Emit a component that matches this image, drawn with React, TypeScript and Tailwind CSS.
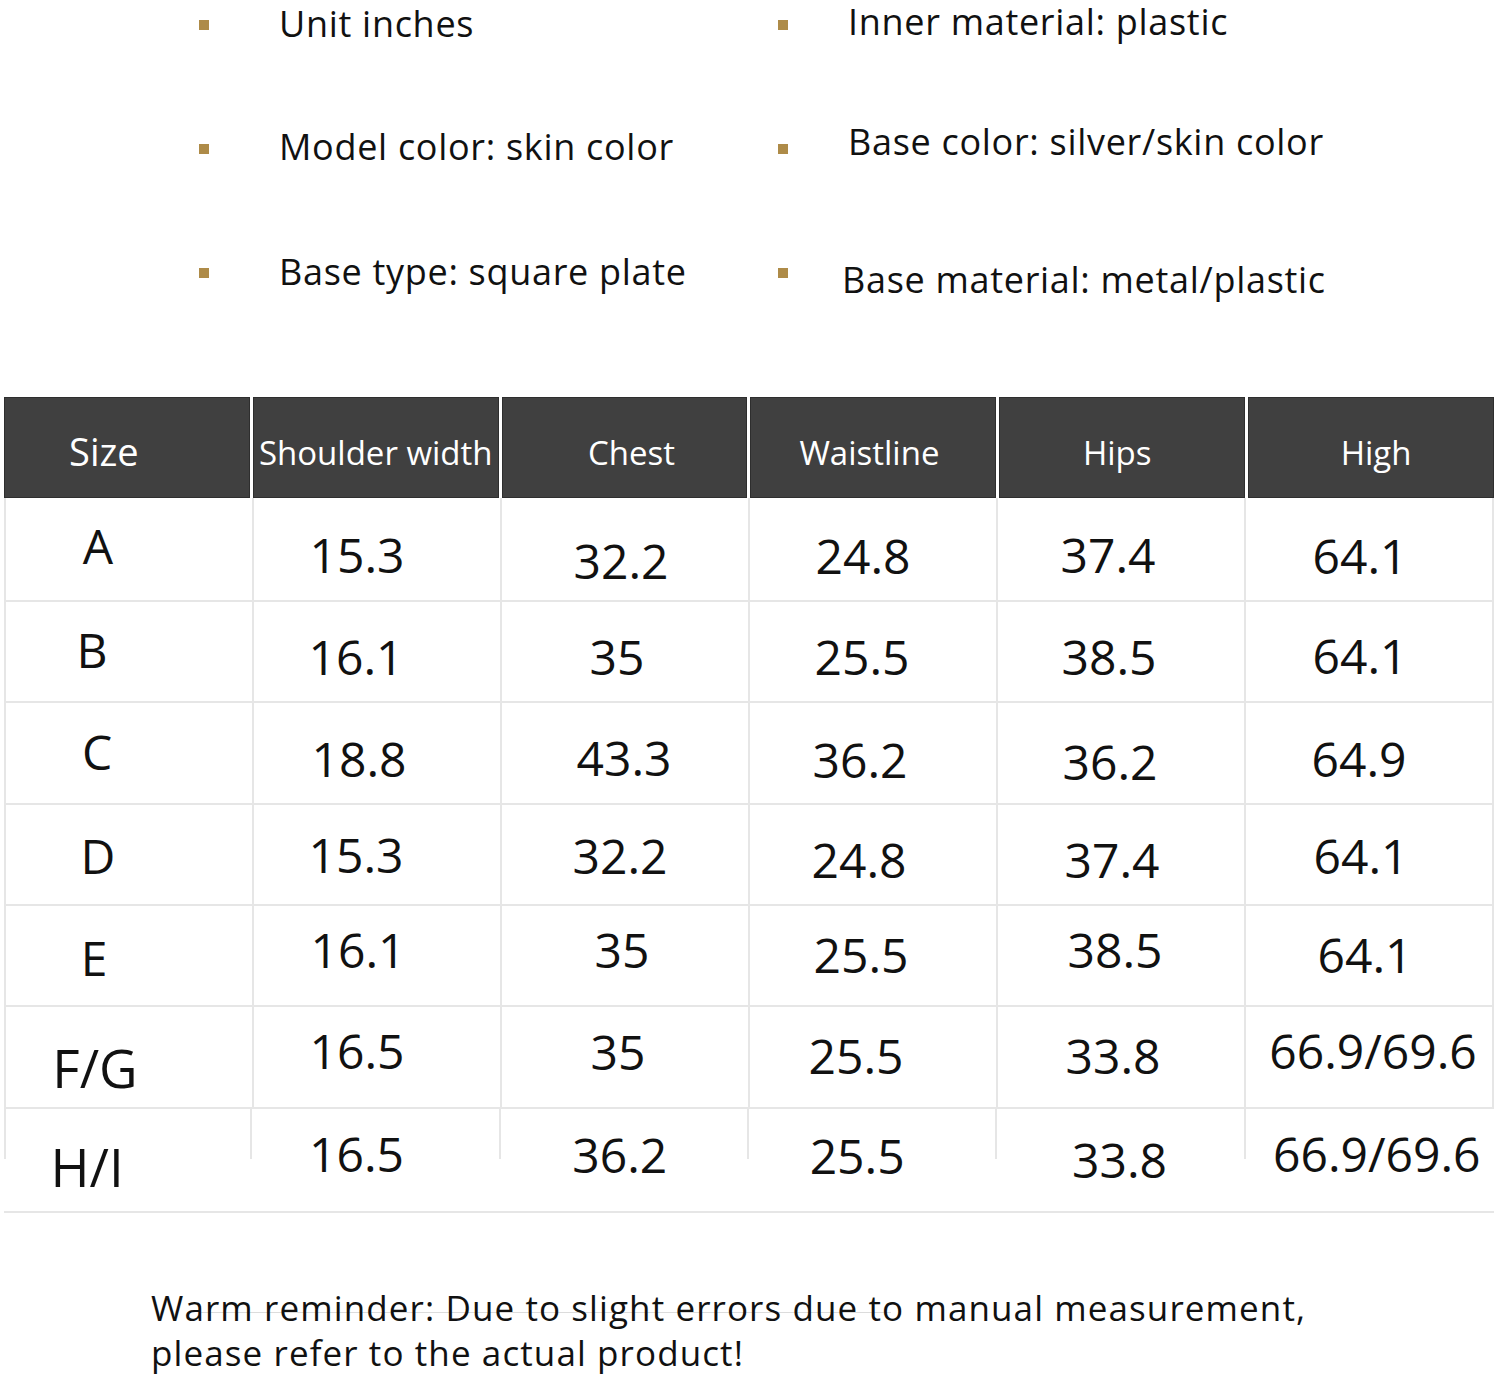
import React from 'react';

type Cell = { text: string; shift: string; size?: string };
type Row = { height: string; cells: Cell[] };

const specs = [
  { label: 'Unit inches', gap: 'ml-[70px]', shift: 'translate-y-[-1px]' },
  { label: 'Inner material: plastic', gap: 'ml-[60px]', shift: 'translate-y-[-3px]' },
  { label: 'Model color: skin color', gap: 'ml-[70px]', shift: 'translate-y-[-2px]' },
  { label: 'Base color: silver/skin color', gap: 'ml-[60px]', shift: 'translate-y-[-7px]' },
  { label: 'Base type: square plate', gap: 'ml-[70px]', shift: 'translate-y-[-1px]' },
  { label: 'Base material: metal/plastic', gap: 'ml-[54px]', shift: 'translate-y-[7px]' },
];

const headers = [
  { label: 'Size', shift: 'translate-x-[-23px] translate-y-[3px] text-[38px]' },
  { label: 'Shoulder width', shift: 'translate-y-[5px] text-[33px]' },
  { label: 'Chest', shift: 'translate-x-[7px] translate-y-[5px] text-[33px]' },
  { label: 'Waistline', shift: 'translate-x-[-4px] translate-y-[5px] text-[33px]' },
  { label: 'Hips', shift: 'translate-x-[-5px] translate-y-[5px] text-[33px]' },
  { label: 'High', shift: 'translate-x-[5px] translate-y-[5px] text-[33px]' },
];

const rows: Row[] = [
  {
    height: 'h-[104px]',
    cells: [
      { text: 'A', shift: 'translate-x-[-31px] translate-y-[-3px]' },
      { text: '15.3', shift: 'translate-x-[-20px] translate-y-[6px]' },
      { text: '32.2', shift: 'translate-x-[-4px] translate-y-[12px]' },
      { text: '24.8', shift: 'translate-x-[-10px] translate-y-[7px]' },
      { text: '37.4', shift: 'translate-x-[-13px] translate-y-[6px]' },
      { text: '64.1', shift: 'translate-x-[-9px] translate-y-[7px]' },
    ],
  },
  {
    height: 'h-[101px]',
    cells: [
      { text: 'B', shift: 'translate-x-[-37px] translate-y-[-2px]' },
      { text: '16.1', shift: 'translate-x-[-21px] translate-y-[5px]' },
      { text: '35', shift: 'translate-x-[-8px] translate-y-[5px]' },
      { text: '25.5', shift: 'translate-x-[-11px] translate-y-[5px]' },
      { text: '38.5', shift: 'translate-x-[-12px] translate-y-[5px]' },
      { text: '64.1', shift: 'translate-x-[-9px] translate-y-[4px]' },
    ],
  },
  {
    height: 'h-[102px]',
    cells: [
      { text: 'C', shift: 'translate-x-[-32px] translate-y-[-1px]' },
      { text: '18.8', shift: 'translate-x-[-18px] translate-y-[6px]' },
      { text: '43.3', shift: 'translate-x-[-1px] translate-y-[5px]' },
      { text: '36.2', shift: 'translate-x-[-13px] translate-y-[7px]' },
      { text: '36.2', shift: 'translate-x-[-11px] translate-y-[9px]' },
      { text: '64.9', shift: 'translate-x-[-10px] translate-y-[6px]' },
    ],
  },
  {
    height: 'h-[101px]',
    cells: [
      { text: 'D', shift: 'translate-x-[-31px] translate-y-[1px]' },
      { text: '15.3', shift: 'translate-x-[-21px]' },
      { text: '32.2', shift: 'translate-x-[-5px] translate-y-[1px]' },
      { text: '24.8', shift: 'translate-x-[-14px] translate-y-[5px]' },
      { text: '37.4', shift: 'translate-x-[-9px] translate-y-[5px]' },
      { text: '64.1', shift: 'translate-x-[-8px] translate-y-[1px]' },
    ],
  },
  {
    height: 'h-[101px]',
    cells: [
      { text: 'E', shift: 'translate-x-[-35px] translate-y-[2px]' },
      { text: '16.1', shift: 'translate-x-[-19px] translate-y-[-6px]' },
      { text: '35', shift: 'translate-x-[-3px] translate-y-[-6px]' },
      { text: '25.5', shift: 'translate-x-[-12px] translate-y-[-1px]' },
      { text: '38.5', shift: 'translate-x-[-6px] translate-y-[-6px]' },
      { text: '64.1', shift: 'translate-x-[-4px] translate-y-[-1px]' },
    ],
  },
  {
    height: 'h-[102px]',
    cells: [
      { text: 'F/G', shift: 'translate-x-[-34px] translate-y-[10px]', size: 'text-[53px]' },
      { text: '16.5', shift: 'translate-x-[-20px] translate-y-[-6px]' },
      { text: '35', shift: 'translate-x-[-7px] translate-y-[-5px]' },
      { text: '25.5', shift: 'translate-x-[-17px] translate-y-[-1px]' },
      { text: '33.8', shift: 'translate-x-[-8px] translate-y-[-1px]' },
      { text: '66.9/69.6', shift: 'translate-x-[4px] translate-y-[-6px]' },
    ],
  },
  {
    height: 'h-[104px]',
    cells: [
      { text: 'H/I', shift: 'translate-x-[-41px] translate-y-[6px]', size: 'text-[53px]' },
      { text: '16.5', shift: 'translate-x-[-20px] translate-y-[-6px]' },
      { text: '36.2', shift: 'translate-x-[-5px] translate-y-[-5px]' },
      { text: '25.5', shift: 'translate-x-[-16px] translate-y-[-4px]' },
      { text: '33.8', shift: 'translate-x-[-2px]' },
      { text: '66.9/69.6', shift: 'translate-x-[7px] translate-y-[-6px]' },
    ],
  },
];

export default function App() {
  return (
    <div className="min-h-[1382px] w-full bg-white font-['Open_Sans','Noto_Sans',sans-serif] text-[#111]">
      {/* spec bullets */}
      <div className="grid grid-cols-[579px_1fr] gap-y-[74px] pl-[199px]">
        {specs.map((s) => (
          <div key={s.label} className="flex h-[50px] items-center">
            <span className="h-[10px] w-[10px] shrink-0 bg-[#ae8b48]" />
            <span className={`${s.gap} ${s.shift} text-[36px] leading-[1.1] tracking-[0.7px]`}>{s.label}</span>
          </div>
        ))}
      </div>

      {/* size table */}
      <div className="ml-[4px] mt-[99px] w-[1490px]">
        <div className="grid h-[101px] grid-cols-6 gap-x-[3px]">
          {headers.map((h) => (
            <div key={h.label} className="flex items-center justify-center border border-[#2e2e2e] bg-[#404040]">
              <span className={`${h.shift} leading-none text-white`}>{h.label}</span>
            </div>
          ))}
        </div>

        {rows.map((row, ri) => {
          const last = ri === rows.length - 1;
          return (
            <div
              key={ri}
              className={`grid grid-cols-6 border-b-2 border-[#e6e6e6] ${row.height} ${last ? '' : 'border-l-2'}`}
            >
              {row.cells.map((c, ci) => (
                <div
                  key={ci}
                  className={
                    last
                      ? `relative flex items-center justify-center after:absolute after:right-0 after:top-0 after:h-[50px] after:w-[2px] after:bg-[#e6e6e6] ${
                          ci === 0 ? 'before:absolute before:left-0 before:top-0 before:h-[50px] before:w-[2px] before:bg-[#e6e6e6]' : ''
                        } ${ci === 5 ? 'after:hidden' : ''}`
                      : 'flex items-center justify-center border-r-2 border-[#e6e6e6]'
                  }
                >
                  <span className={`${c.shift} ${c.size ?? 'text-[48px]'} leading-none`}>{c.text}</span>
                </div>
              ))}
            </div>
          );
        })}
      </div>

      {/* note */}
      <div className="relative ml-[151px] mt-[72px] text-[35px] leading-[45px] tracking-[1.1px]">
        <div className="absolute left-[50px] top-[27px] h-px w-[690px] bg-[#dcdcdc]" />
        <p className="relative">Warm reminder: Due to slight errors due to manual measurement,</p>
        <p className="relative">please refer to the actual product!</p>
      </div>
    </div>
  );
}
